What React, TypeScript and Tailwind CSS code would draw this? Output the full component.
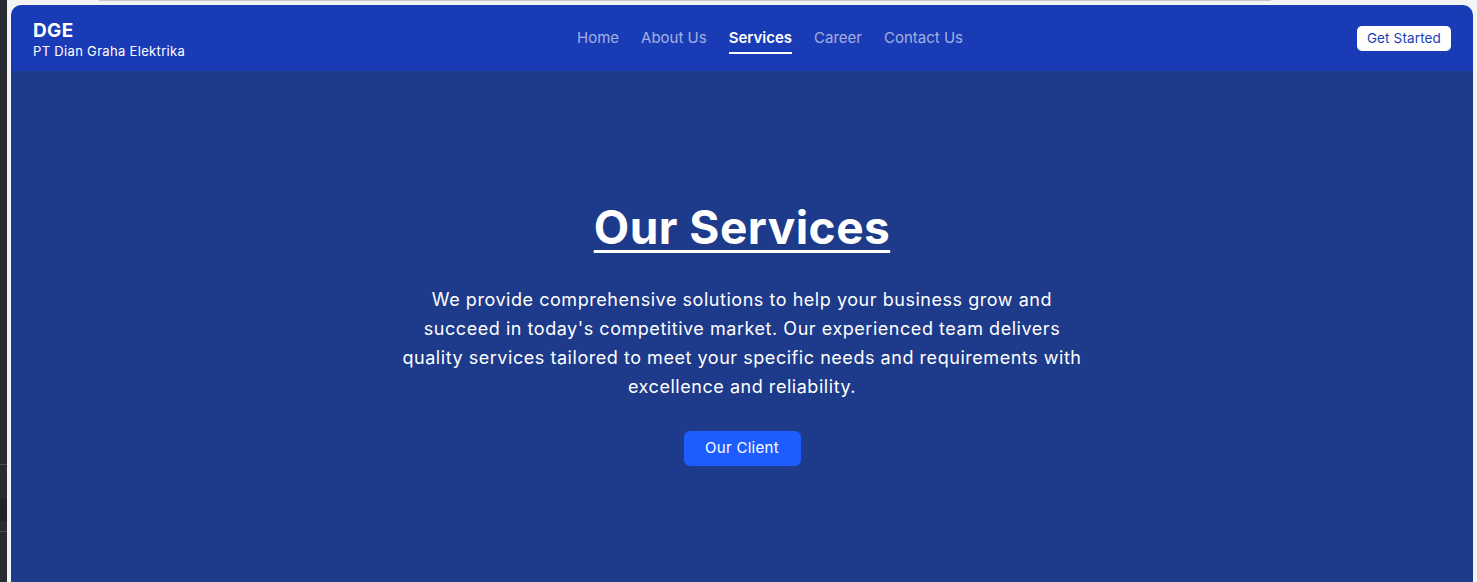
import React from "react";

const links = ["Home", "About Us", "Services", "Career", "Contact Us"];

function Navbar() {
  return (
    <nav className="flex h-[66px] items-center justify-between rounded-t-[10px] bg-[#1a3bb6] pl-[22px] pr-[22px]">
      <div className="mt-[2px] flex flex-col leading-none">
        <span className="text-[19px] font-bold tracking-[0.02em] text-white">DGE</span>
        <span className="mt-[5px] text-[13px] tracking-[0.025em] text-white">PT Dian Graha Elektrika</span>
      </div>

      <ul className="mr-[2px] mt-[1px] flex items-center gap-[22px] text-[15px]">
        {links.map((l) =>
          l === "Services" ? (
            <li key={l} className="relative font-semibold text-white">
              {l}
              <span className="absolute -bottom-[4px] left-0 h-[2px] w-full bg-white" />
            </li>
          ) : (
            <li key={l} className="text-white/60">
              {l}
            </li>
          )
        )}
      </ul>

      <button className="h-[25px] rounded-[5px] bg-white px-[10px] text-[13.5px] tracking-[0.01em] text-[#1a3bb6]">
        Get Started
      </button>
    </nav>
  );
}

function Hero() {
  return (
    <section className="flex flex-1 flex-col items-center bg-[#1e3a8a] pt-[133px] text-center text-white">
      <h1 className="text-[46px] font-bold leading-none tracking-[0.01em] underline decoration-[3px] underline-offset-[6px]">
        Our Services
      </h1>
      <p className="mt-[35px] text-[18px] leading-[29px] tracking-[0.03em]">
        We provide comprehensive solutions to help your business grow and
        <br />
        succeed in today's competitive market. Our experienced team delivers
        <br />
        quality services tailored to meet your specific needs and requirements with
        <br />
        excellence and reliability.
      </p>
      <button className="mt-[30px] h-[35px] w-[117px] rounded-[6px] bg-[#1d5cff] text-[15px] tracking-[0.02em] text-white">
        Our Client
      </button>
    </section>
  );
}

export default function App() {
  return (
    <div
      className="flex h-[582px] w-[1477px] overflow-hidden bg-[#f4f4f4]"
      style={{ fontFamily: "Inter, 'Noto Sans', sans-serif" }}
    >
      <div className="flex w-[7px] flex-col bg-[#282b31]">
        <div className="h-[464px]" />
        <div className="h-[1px] bg-[#4a4d53]" />
        <div className="mt-[34px] h-[22px] bg-[#202226]" />
        <div className="mt-[10px] h-[1px] bg-[#4a4d53]" />
      </div>
      <div className="flex flex-1 flex-col pl-[4px] pr-[4px]">
        <div className="relative h-[5px]">
          <div className="absolute left-[88px] top-0 h-[1px] w-[1172px] bg-[#c8c8c8]" />
        </div>
        <div className="flex flex-1 flex-col">
          <Navbar />
          <Hero />
        </div>
      </div>
    </div>
  );
}
